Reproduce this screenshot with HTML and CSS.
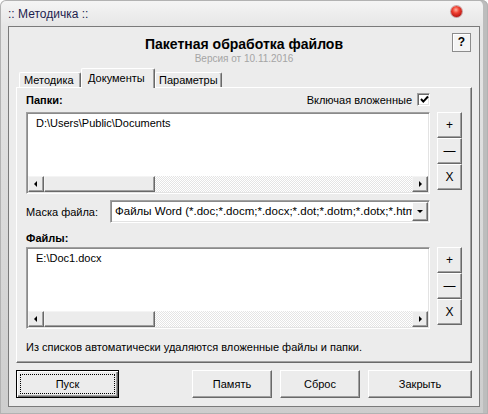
FILE: index.html
```html
<!DOCTYPE html>
<html lang="ru">
<head>
<meta charset="utf-8">
<title>Методичка</title>
<link rel="stylesheet" href="styles.css">
</head>
<body>
<div class="window">
  <div class="titlebar">
    <span class="title">:: Методичка ::</span>
    <span class="close"></span>
  </div>
  <div class="client">
    <div class="header">
      <div class="heading">
        <div class="h-title">Пакетная обработка файлов</div>
        <div class="h-version">Версия от 10.11.2016</div>
      </div>
      <div class="help">?</div>
    </div>
    <div class="tabs">
      <div class="tab t1">Методика</div>
      <div class="tab t2 active">Документы</div>
      <div class="tab t3">Параметры</div>
    </div>
    <div class="panel">
      <div class="row-head">
        <span class="label-b">Папки:</span>
        <span class="chk">Включая вложенные <span class="box"><svg width="9" height="9" viewBox="0 0 9 9"><polyline points="1,4 3.3,6.6 8,1.5" fill="none" stroke="#000" stroke-width="2"/></svg></span></span>
      </div>
      <div class="list-row">
        <div class="listbox">
          <div class="items"><div class="item">D:\Users\Public\Documents</div></div>
          <div class="hscroll">
            <span class="sb-btn sb-left"></span>
            <span class="sb-thumb"></span>
            <span class="sb-track"></span>
            <span class="sb-btn sb-right"></span>
          </div>
        </div>
        <div class="side-btns">
          <div class="btn side">+</div>
          <div class="btn side">—</div>
          <div class="btn side">X</div>
        </div>
      </div>
      <div class="mask-row">
        <span class="mask-label">Маска файла:</span>
        <div class="combo">
          <span class="combo-text">Файлы Word (*.doc;*.docm;*.docx;*.dot;*.dotm;*.dotx;*.htm;*.html;*.rtf;*.mht;*.mhtml;*.xml;*.odt)</span>
          <span class="combo-btn"></span>
        </div>
      </div>
      <div class="row-files">
        <span class="label-b">Файлы:</span>
      </div>
      <div class="list-row">
        <div class="listbox">
          <div class="items"><div class="item">E:\Doc1.docx</div></div>
          <div class="hscroll">
            <span class="sb-btn sb-left"></span>
            <span class="sb-thumb"></span>
            <span class="sb-track"></span>
            <span class="sb-btn sb-right"></span>
          </div>
        </div>
        <div class="side-btns">
          <div class="btn side">+</div>
          <div class="btn side">—</div>
          <div class="btn side">X</div>
        </div>
      </div>
      <div class="note">Из списков автоматически удаляются вложенные файлы и папки.</div>
    </div>
    <div class="footer">
      <div class="btn default"><span class="focus">Пуск</span></div>
      <div class="btn wide mem">Память</div>
      <div class="btn wide">Сброс</div>
      <div class="btn wide close-btn">Закрыть</div>
    </div>
  </div>
</div>
</body>
</html>
```

FILE: styles.css
```css
* { box-sizing: border-box; margin: 0; padding: 0; }
html, body { width: 488px; height: 414px; overflow: hidden; background: #ffffff; }
body { font-family: "Liberation Sans", Arial, sans-serif; font-size: 11px; color: #000; }

.window {
  width: 488px; height: 414px;
  display: flex; flex-direction: column;
  background: linear-gradient(to bottom, #f5f5f5 0, #e6e6e6 26px, #d8d8d8 60%, #cdcdcd 100%);
  border-radius: 6px 6px 0 0;
  box-shadow: inset 0 0 0 1px #b2b2b2, inset -5px 0 0 #bdbdbd;
}

.titlebar { height: 26px; display: flex; justify-content: space-between; align-items: flex-start; padding: 0 8px; }
.title { font-size: 12px; line-height: 14px; padding-top: 7px; color: #1d1d4e; }
.close {
  width: 11px; height: 11px; margin-top: 6px; margin-right: 18px; border-radius: 50%;
  background: radial-gradient(circle at 45% 35%, #ffb0a0 0, #f04030 35%, #b01010 80%, #801010 100%);
  box-shadow: 0 0 0 1px rgba(120,20,20,0.35);
}

.client {
  flex: 1; margin: 0 8px 7px 8px;
  background: #ececec; border: 1px solid #7a7a7a;
  padding: 0 7px; display: flex; flex-direction: column;
}

.header { height: 41px; display: grid; grid-template-columns: 1fr auto 1fr; }
.heading { grid-column: 2; padding-top: 8px; text-align: center; }
.h-title { font-size: 14px; font-weight: bold; line-height: 18px; }
.h-version { font-size: 10px; line-height: 12px; color: #a5a5a5; }
.help {
  grid-column: 3; justify-self: end; align-self: start;
  width: 19px; height: 19px; margin-top: 6px; margin-right: 1px;
  border: 1px solid #8c8c8c; background: #f4f4f4;
  box-shadow: inset 1px 1px 0 #fff;
  font-size: 12px; font-weight: bold; line-height: 17px; text-align: center;
}

.tabs { height: 19px; display: flex; align-items: flex-end; padding-left: 3px; position: relative; z-index: 1; }
.tab {
  height: 15px; line-height: 14px; font-size: 11px;
  border-top: 1px solid #fff; border-left: 1px solid #fff; border-right: 1px solid #696969;
  box-shadow: inset -1px 0 0 #a0a0a0;
  border-radius: 2px 2px 0 0; background: #ececec;
  padding-left: 4px; white-space: nowrap;
}
.t1 { width: 62px; }
.t2 { width: 74px; }
.t3 { width: 67px; padding-left: 3px; }
.tab.active { height: 20px; margin-bottom: -1px; line-height: 18px; padding-left: 6px; }

.panel {
  height: 276px;
  border: 1px solid; border-color: #fff #696969 #696969 #fff;
  box-shadow: inset -1px -1px 0 #a0a0a0;
  padding: 4px 9px 0 9px;
  display: flex; flex-direction: column;
}
.label-b { font-weight: bold; }
.row-head { height: 16px; margin-right: 32px; margin-bottom: 4px; display: flex; justify-content: space-between; align-items: center; }
.chk { display: flex; align-items: center; gap: 5px; }
.box {
  width: 13px; height: 13px; background: #fff;
  border: 1px solid; border-color: #a0a0a0 #fff #fff #a0a0a0;
  box-shadow: inset 1px 1px 0 #696969, inset -1px -1px 0 #e3e3e3;
  display: flex; align-items: center; justify-content: center; padding: 1px 0 0 1px;
  margin-top: -2px;
}

.list-row { height: 82px; display: flex; gap: 7px; }
.listbox {
  flex: 1; min-width: 0; background: #fff; display: flex; flex-direction: column;
  border: 1px solid; border-color: #a0a0a0 #fff #fff #a0a0a0;
  box-shadow: inset 1px 1px 0 #8a8a8a, inset -1px -1px 0 #e3e3e3;
  padding: 1px;
}
.items { flex: 1; padding: 2px 0 0 8px; }
.item { line-height: 14px; }
.hscroll { height: 16px; display: flex; }
.sb-btn, .sb-thumb {
  background: #ececec;
  border: 1px solid; border-color: #f4f4f4 #696969 #696969 #f4f4f4;
  box-shadow: inset -1px -1px 0 #a0a0a0;
  position: relative;
}
.sb-btn { width: 16px; }
.sb-thumb { width: 111px; }
.sb-track { flex: 1; background: repeating-conic-gradient(#ffffff 0 25%, #e4e4e4 0 50%) 0 0 / 2px 2px; }
.sb-left::after, .sb-right::after {
  content: ""; position: absolute; top: 4px; width: 0; height: 0;
  border-top: 3px solid transparent; border-bottom: 3px solid transparent;
}
.sb-left::after { left: 5px; border-right: 3px solid #000; }
.sb-right::after { left: 6px; border-left: 3px solid #000; }

.side-btns { width: 25px; flex-shrink: 0; display: flex; flex-direction: column; }
.btn {
  background: #ececec;
  border: 1px solid; border-color: #fff #696969 #696969 #fff;
  box-shadow: inset -1px -1px 0 #a0a0a0;
  display: flex; align-items: center; justify-content: center;
  font-size: 11px;
}
.side { height: 26px; font-size: 12px; }

.mask-row { height: 23px; margin-top: 6px; margin-right: 32px; display: flex; align-items: center; }
.mask-label { width: 84px; flex-shrink: 0; white-space: nowrap; }
.combo {
  flex: 1; min-width: 0; height: 23px; display: flex; background: #fff;
  border: 1px solid; border-color: #a0a0a0 #fff #fff #a0a0a0;
  box-shadow: inset 1px 1px 0 #8a8a8a, inset -1px -1px 0 #e3e3e3;
  padding: 1px;
}
.combo-text { flex: 1; min-width: 0; overflow: hidden; white-space: nowrap; padding-left: 3px; line-height: 19px; font-size: 11.5px; }
.combo-btn {
  width: 16px; flex-shrink: 0; background: #ececec; position: relative;
  border: 1px solid; border-color: #fff #696969 #696969 #fff;
  box-shadow: inset -1px -1px 0 #a0a0a0;
}
.combo-btn::after {
  content: ""; position: absolute; left: 4px; top: 7px; width: 0; height: 0;
  border-left: 3px solid transparent; border-right: 3px solid transparent; border-top: 3px solid #000;
}

.row-files { height: 19px; margin-top: 5px; display: flex; align-items: center; }
.note { margin-top: 8px; line-height: 20px; }

.footer { margin-top: 7px; height: 28px; display: flex; gap: 8px; }
.btn.default {
  width: 103px; border: 1px solid #000; padding: 3px;
  box-shadow: inset 1px 1px 0 #fff, inset -1px -1px 0 #696969, inset -2px -2px 0 #a0a0a0;
}
.focus { flex: 1; align-self: stretch; border: 1px dotted #000; display: flex; align-items: center; justify-content: center; }
.wide { width: 80px; }
.mem { margin-left: auto; }
.close-btn { width: 104px; }
```
